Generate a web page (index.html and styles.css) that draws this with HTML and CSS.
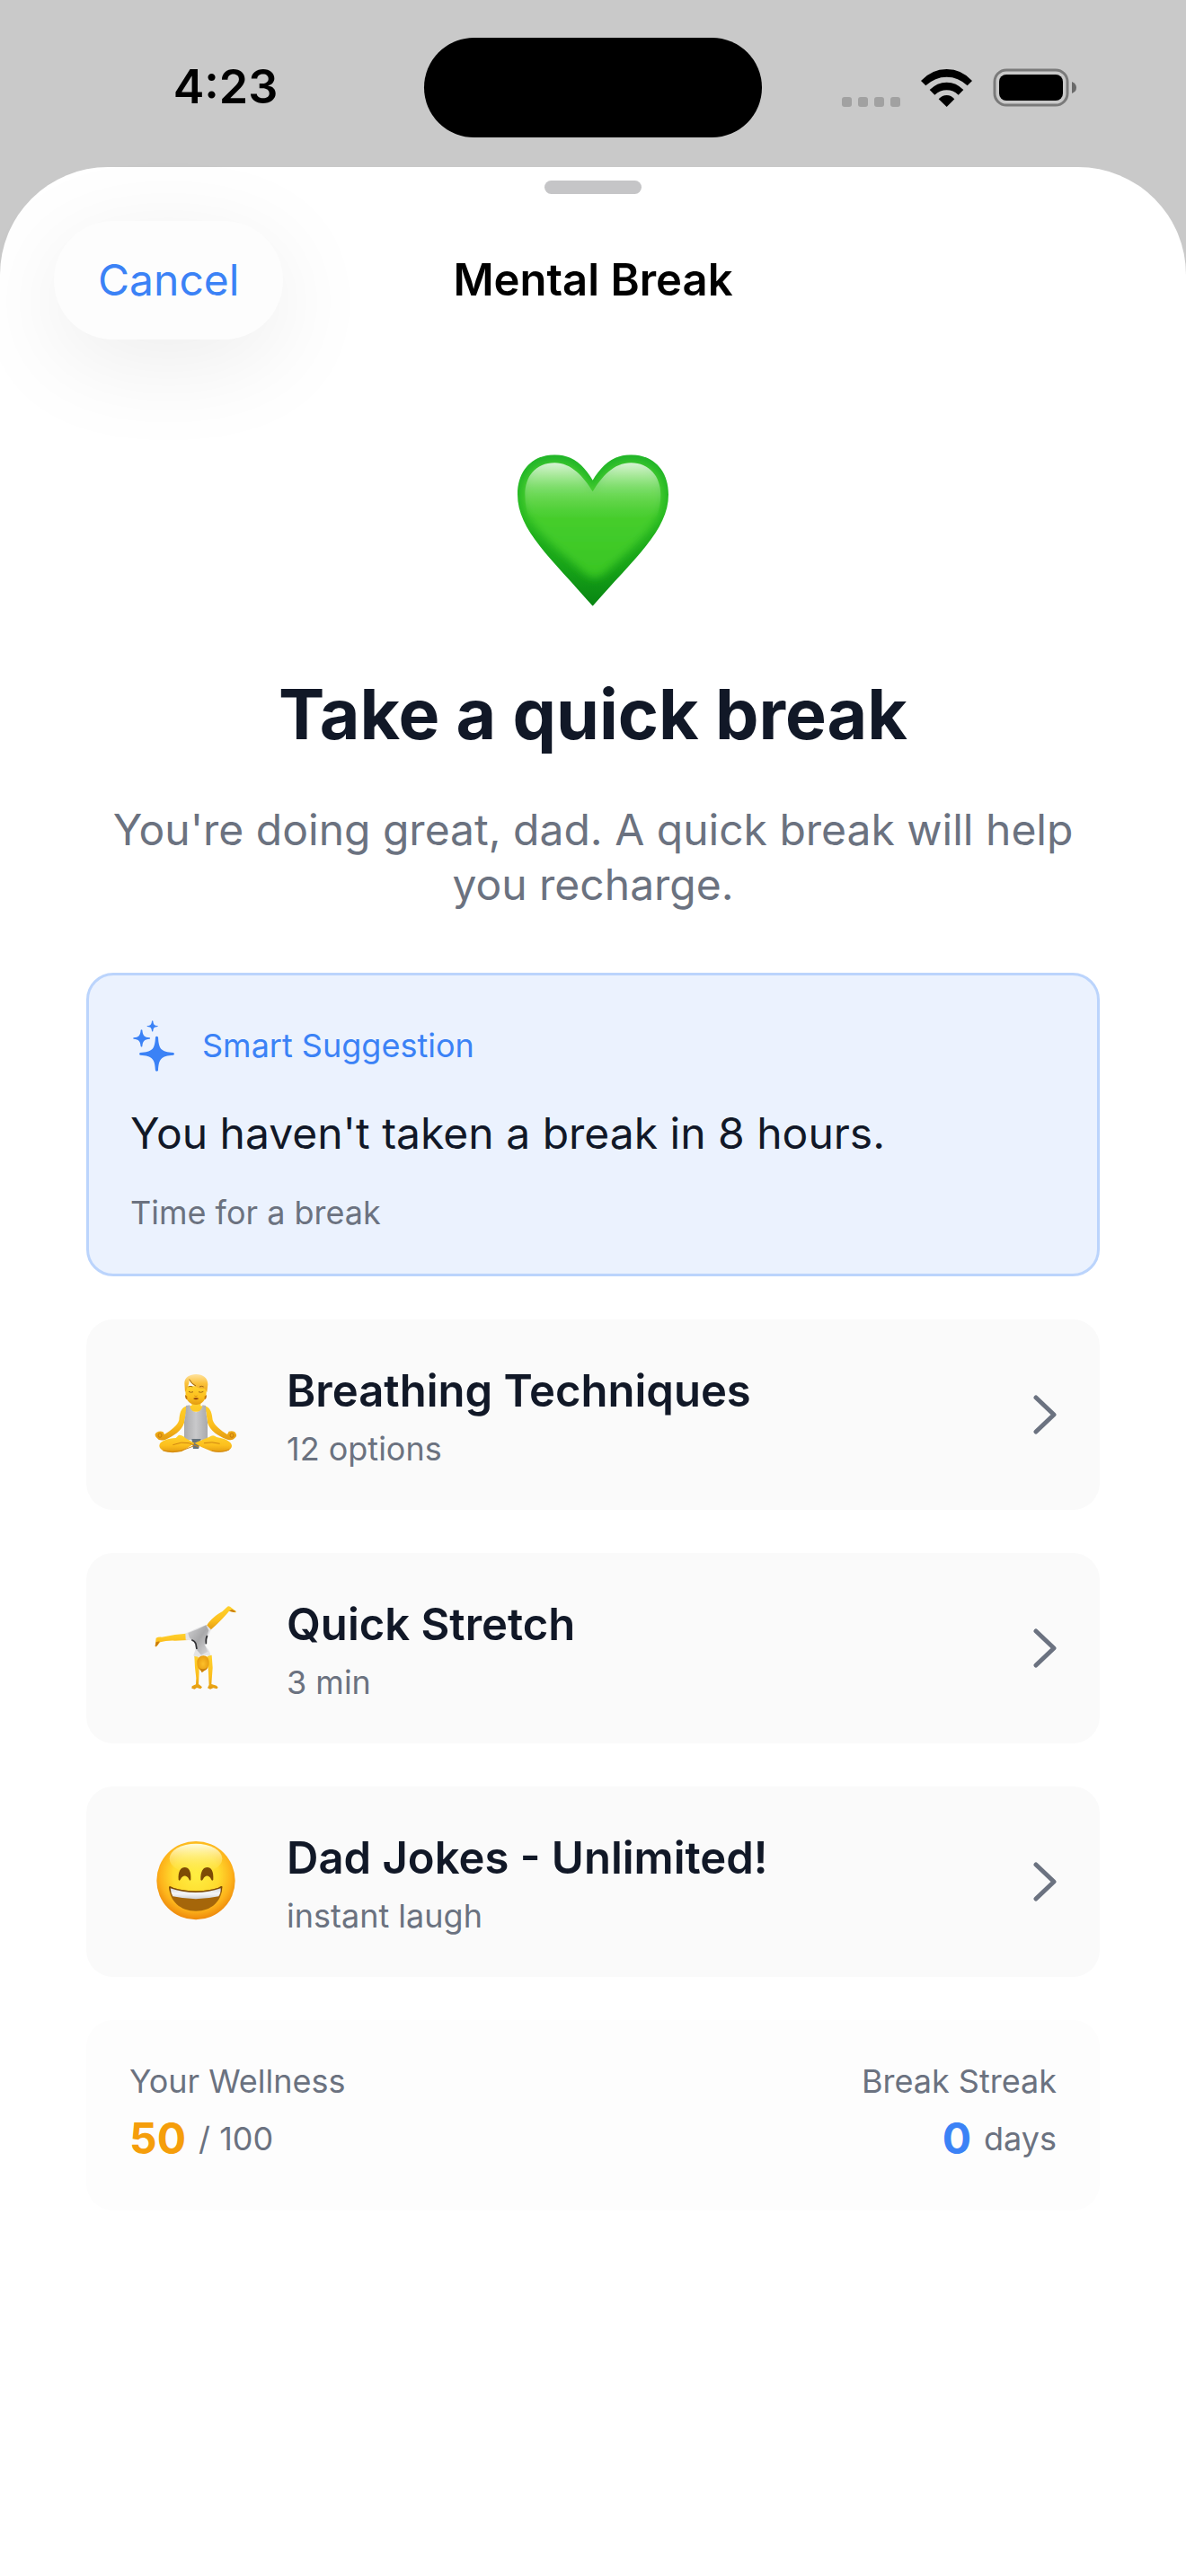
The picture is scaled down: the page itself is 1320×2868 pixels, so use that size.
FILE: index.html
```html
<!DOCTYPE html>
<html lang="en">
<head>
<meta charset="utf-8">
<meta name="viewport" content="width=device-width, initial-scale=1">
<title>Mental Break</title>
<link rel="stylesheet" href="styles.css">
</head>
<body>
<div class="screen">
  <div class="status-bar">
    <time class="status-time">4:23</time>
    <div class="island"></div>
    <div class="status-icons">
      <svg class="icon-signal" viewBox="0 0 65 11" aria-hidden="true">
        <g fill="#a1a1a1"><rect width="11" height="11" rx="3"/><rect x="18" width="11" height="11" rx="3"/><rect x="36" width="11" height="11" rx="3"/><rect x="54" width="11" height="11" rx="3"/></g>
      </svg>
      <svg class="icon-wifi" viewBox="375 75 171 126" aria-hidden="true">
        <path d="M375 114Q411 75 461 75T546 114L530 130Q500 101 461 101T391 130Z"/>
        <path d="M404 144Q429 119 461 119T517 144L500 161Q483 145 461 145T421 161Z"/>
        <path d="M434 175Q446 162 461 162T487 175L461 201Z"/>
      </svg>
      <svg class="icon-battery" viewBox="0 0 93 43" aria-hidden="true">
        <rect x="2" y="2" width="81" height="39" rx="13" fill="none" stroke="#7a7a7a" stroke-width="3"/>
        <rect x="7" y="7" width="71" height="29" rx="8"/>
        <path d="M88 15Q93 17 93 21.500T88 28Z" fill="#6a6a6a"/>
      </svg>
    </div>
  </div>

  <main class="sheet">
    <div class="grabber"></div>
    <header class="nav">
      <button class="cancel" type="button">Cancel</button>
      <h1 class="nav-title">Mental Break</h1>
    </header>

    <div class="content">
      <section class="hero">
        <svg class="heart" viewBox="105 77 504 506" role="img" aria-label="Green heart">
          <defs>
            <linearGradient id="heart-base" x1="0" y1="0" x2="0" y2="1"><stop offset="0" stop-color="#21b52a"/><stop offset=".4" stop-color="#27b920"/><stop offset=".75" stop-color="#16a118"/><stop offset="1" stop-color="#078312"/></linearGradient>
            <linearGradient id="heart-fill" x1="0" y1="0" x2="0" y2="1"><stop offset="0" stop-color="#4fd233"/><stop offset=".5" stop-color="#45cd2c"/><stop offset="1" stop-color="#38c522"/></linearGradient>
            <linearGradient id="heart-shine" x1="0" y1="0" x2="0" y2="1"><stop offset="0" stop-color="#fff" stop-opacity=".8"/><stop offset=".45" stop-color="#d8f5d0" stop-opacity=".35"/><stop offset="1" stop-color="#9be58a" stop-opacity="0"/></linearGradient>
            <filter id="heart-soft" x="-20%" y="-20%" width="140%" height="140%"><feGaussianBlur stdDeviation="14"/></filter>
            <clipPath id="heart-clip"><path d="M356 163C386 112 425 77 484 77C553 77 609 125 609 210C609 330 494 424 356 583C219 424 105 330 105 210C105 125 160 77 229 77C288 77 327 112 356 163Z"/></clipPath>
          </defs>
          <g clip-path="url(#heart-clip)">
            <rect x="100" y="70" width="520" height="520" fill="url(#heart-base)"/>
            <path filter="url(#heart-soft)" fill="url(#heart-fill)" d="M356 195C390 140 425 105 484 105C545 105 590 145 590 215C590 310 490 385 395 475Q362 500 330 475C240 390 122 310 122 215C122 145 170 105 229 105C288 105 325 140 356 195Z"/>
            <path fill="url(#heart-shine)" d="M356 200C325 150 285 104 229 104C165 104 130 150 130 210Q130 255 145 290H567Q583 255 583 210C583 150 545 104 484 104C425 104 387 150 356 200Z"/>
          </g>
        </svg>
        <h2 class="hero-title">Take a quick break</h2>
        <p class="hero-text">You're doing great, dad. A quick break will help you recharge.</p>
      </section>

      <section class="suggestion">
        <div class="suggestion-head">
          <svg class="icon-sparkles" viewBox="48 45 180 180" aria-hidden="true">
            <path d="M132 107Q136 102 141 107C143 146 150 156 192 159Q198 163 192 167C150 170 143 180 141 219Q136 224 132 219C130 180 123 170 81 167Q75 163 81 159C123 156 130 146 132 107Z"/>
            <path d="M83 83Q86 80 88 83C90 102 94 107 113 109Q116 111 113 113C94 115 90 120 88 138Q86 141 83 138C81 120 77 115 59 113Q56 111 59 109C77 107 81 102 83 83Z"/>
            <path d="M120 53Q122 50 124 53C125 64 128 68 139 69Q142 70 139 72C128 73 125 76 124 87Q122 90 120 87C119 76 116 73 105 72Q102 70 105 69C116 68 119 64 120 53Z"/>
          </svg>
          <span class="small suggestion-label">Smart Suggestion</span>
        </div>
        <p class="suggestion-message">You haven't taken a break in 8 hours.</p>
        <p class="small">Time for a break</p>
      </section>

      <button class="option" type="button">
        <span class="option-icon">
          <svg class="emoji" viewBox="66 87 276 276" aria-hidden="true">
            <defs>
              <linearGradient id="skin" x1="0" y1="0" x2="0" y2="1"><stop offset="0" stop-color="#ffd22e"/><stop offset=".6" stop-color="#fcbf1d"/><stop offset="1" stop-color="#e29a12"/></linearGradient>
              <linearGradient id="vest" x1="0" y1="0" x2="1" y2="0"><stop offset="0" stop-color="#a9a9ab"/><stop offset=".5" stop-color="#c9c9cb"/><stop offset="1" stop-color="#a9a9ab"/></linearGradient>
              <linearGradient id="hair" x1="0" y1="0" x2="0" y2="1"><stop offset="0" stop-color="#ffe3a0"/><stop offset=".5" stop-color="#fbc23c"/><stop offset="1" stop-color="#e9a51f"/></linearGradient>
            </defs>
            <path fill="url(#skin)" d="M190 178H220V196L238 197C254 203 258 222 260 243C266 262 287 277 309 291L314 281Q325 277 334 283Q345 295 334 303Q325 314 305 307C281 297 251 280 243 252L238 215H172L165 252C157 280 128 297 103 308Q82 315 74 303Q62 292 73 284Q85 277 95 283L99 291C121 277 143 262 148 243C150 222 153 203 170 197L190 195Z"/>
            <g fill="none" stroke="#c7790b" stroke-width="3"><ellipse cx="84" cy="294" rx="6" ry="7"/><ellipse cx="324" cy="294" rx="6" ry="7"/></g>
            <path fill="url(#vest)" d="M171 195L184 193C185 224 224 225 226 193L237 195C238 218 240 235 243 250V310H165V250C168 235 171 218 171 195Z"/>
            <path fill="#66727c" d="M190 306H221L213 339H195Z"/>
            <path fill="url(#skin)" d="M147 293Q159 292 170 304L222 333L258 348C286 354 322 349 324 330C325 314 298 304 273 300Q262 290 248 300L204 318L157 348C121 356 85 350 82 330C81 313 110 304 137 303Z"/>
            <path fill="none" stroke="#d08612" stroke-width="3" d="M127 326Q157 314 181 320L214 333M284 322Q258 314 231 320M94 345Q126 352 154 346L196 330M258 346Q292 353 315 342"/>
            <path fill="url(#skin)" d="M168 130H241L238 162C235 180 220 192 204 192S172 180 170 162Z"/>
            <path fill="#bf750d" d="M168 159L175 164V174Q168 174 168 159M240 159L233 164V174Q240 174 240 159"/>
            <path fill="url(#hair)" d="M168 150L166 121C165 100 185 90 204 90C228 90 244 102 244 124L241 150L234 138C214 140 195 130 181 110C183 122 177 128 173 140Z"/>
            <path fill="none" stroke="#9c6416" stroke-width="3" d="M182 107Q190 123 204 129M180 148Q187 153 195 149M213 149Q221 153 229 148M179 132Q186 128 193 132M216 132Q224 128 230 132"/>
            <path fill="none" stroke="#dd9310" stroke-width="3" d="M199 162Q204 166 209 162"/>
            <path fill="#8a3b10" d="M195 171Q204 166 214 171Q204 179 195 171"/>
          </svg>
        </span>
        <span class="option-text"><span class="option-title">Breathing Techniques</span><span class="small">12 options</span></span>
        <svg class="chevron" viewBox="0 0 26 44" aria-hidden="true"><path d="M3 3L23 22L3 41"/></svg>
      </button>

      <button class="option" type="button">
        <span class="option-icon">
          <svg class="emoji" viewBox="66 87 276 276" aria-hidden="true">
            <defs>
              <linearGradient id="suit" x1="0" y1="0" x2="1" y2="1"><stop offset="0" stop-color="#cfcfd1"/><stop offset=".5" stop-color="#a8a8aa"/><stop offset="1" stop-color="#d9d9db"/></linearGradient>
              <radialGradient id="head-back"><stop offset="0" stop-color="#fdc02a"/><stop offset="1" stop-color="#e89d10"/></radialGradient>
            </defs>
            <path fill="url(#skin)" d="M172 176L134 180L90 188Q79 187 71 191L68 219Q73 223 77 214L85 205Q105 199 134 200L178 198Z"/>
            <path fill="url(#skin)" d="M240 149C252 130 274 112 292 103L308 88Q312 82 318 86L338 102Q339 108 331 105L315 101C300 120 275 145 253 164Z"/>
            <path fill="#c87b10" d="M68 219L71 205L83 202L77 214ZM338 102L324 96L315 101L331 105Z"/>
            <path fill="#e4e4e6" d="M169 176Q205 158 239 147L255 163L244 187L235 215L249 235L255 253L238 249L220 251L201 258L196 249L203 228L200 207L187 199L170 197Z"/>
            <path fill="url(#suit)" d="M178 174Q211 163 238 148L247 166L240 187L233 213L244 236L222 248L208 232L204 211L190 197Q180 190 178 174Z"/>
            <path fill="none" stroke="#303033" stroke-width="5" d="M190 197Q201 201 204 211L207 228M242 183Q236 194 238 211"/>
            <path fill="url(#skin)" d="M199 252L212 254L215 304L213 345L217 348L225 355L220 361L207 357L200 362L190 359L191 352L204 346L205 325L201 290ZM242 252L257 248L260 290L256 345L273 350L278 356L274 361L262 358L252 362L243 358L248 347L246 310Z"/>
            <path fill="url(#head-back)" d="M208 274C207 260 217 250 229 250S249 260 248 276C248 289 239 296 230 302Q225 308 222 302C211 294 208 286 208 274Z"/>
            <path fill="#c97f0e" d="M211 288Q228 302 245 287Q241 297 230 301L223 306Q223 298 211 288Z"/>
          </svg>
        </span>
        <span class="option-text"><span class="option-title">Quick Stretch</span><span class="small">3 min</span></span>
        <svg class="chevron" viewBox="0 0 26 44" aria-hidden="true"><path d="M3 3L23 22L3 41"/></svg>
      </button>

      <button class="option" type="button">
        <span class="option-icon">
          <svg class="emoji" viewBox="66 87 276 276" aria-hidden="true">
            <defs>
              <radialGradient id="face" cx=".5" cy=".43" r=".58"><stop offset="0" stop-color="#ffee42"/><stop offset=".5" stop-color="#ffdc2e"/><stop offset=".78" stop-color="#fdb31b"/><stop offset="1" stop-color="#ec840a"/></radialGradient>
              <linearGradient id="face-shine" x1="0" y1="0" x2="0" y2="1"><stop offset="0" stop-color="#fffde0"/><stop offset="1" stop-color="#fff36a" stop-opacity="0"/></linearGradient>
              <linearGradient id="teeth" x1="0" y1="0" x2="0" y2="1"><stop offset="0" stop-color="#d5d7dc"/><stop offset=".5" stop-color="#f5f6f8"/><stop offset="1" stop-color="#cfd1d6"/></linearGradient>
            </defs>
            <circle cx="204" cy="221" r="131" fill="url(#face)"/>
            <ellipse cx="204" cy="148" rx="88" ry="50" fill="url(#face-shine)"/>
            <path fill="#7d4a05" d="M146 218C144 190 154 177 167 177S189 190 187 218Q184 225 181 217C174 202 160 202 153 217Q149 225 146 218ZM220 218C219 190 229 177 242 177S264 190 262 218Q258 225 255 217C248 202 235 202 228 217Q223 225 220 218Z"/>
            <path fill="#a5660a" d="M114 243C116 237 124 243 130 246C175 260 232 260 277 246C284 243 292 236 292 243C291 290 256 323 204 323S117 290 114 243Z"/>
            <path fill="#7d4a05" d="M114 243C116 237 124 243 130 246C175 260 232 260 277 246C284 243 292 236 292 243L289 260Q204 285 118 260Z"/>
            <path fill="url(#teeth)" d="M119 247C170 266 236 266 287 247Q288 263 280 274Q204 291 127 274Q120 262 119 247Z"/>
          </svg>
        </span>
        <span class="option-text"><span class="option-title">Dad Jokes - Unlimited!</span><span class="small">instant laugh</span></span>
        <svg class="chevron" viewBox="0 0 26 44" aria-hidden="true"><path d="M3 3L23 22L3 41"/></svg>
      </button>

      <section class="stats">
        <div class="stat">
          <span class="small">Your Wellness</span>
          <span class="stat-row"><strong class="stat-value wellness">50</strong><span class="small">/ 100</span></span>
        </div>
        <div class="stat stat-end">
          <span class="small">Break Streak</span>
          <span class="stat-row"><strong class="stat-value streak">0</strong><span class="small">days</span></span>
        </div>
      </section>
    </div>
  </main>
</div>
</body>
</html>
```
FILE: styles.css
```css
* {
  box-sizing: border-box;
}

body {
  margin: 0;
  background: #c9c9c9;
  color: #111827;
  font-family: Inter, "Liberation Sans", sans-serif;
  font-size: 48px;
  line-height: 64px;
}

h1, h2, p {
  margin: 0;
}

button {
  border: 0;
  font: inherit;
  color: inherit;
}

.screen {
  display: flex;
  flex-direction: column;
  min-height: 100vh;
}

/* Status bar */
.status-bar {
  display: grid;
  grid-template-columns: 1fr 376px 1fr;
  align-items: center;
  height: 186px;
  padding-top: 8px;
}

.status-time {
  padding-left: 30px;
  text-align: center;
  font-size: 52px;
  font-weight: 600;
  color: #000;
}

.island {
  height: 111px;
  border-radius: 56px;
  background: #000;
}

.status-icons {
  display: flex;
  justify-content: flex-end;
  align-items: flex-end;
  gap: 23px;
  padding-right: 122px;
}

.icon-signal {
  width: 65px;
  height: 11px;
}

.icon-wifi {
  width: 57px;
  height: 42px;
}

.icon-battery {
  width: 93px;
  height: 43px;
}

/* Sheet */
.sheet {
  flex: 1;
  display: flex;
  flex-direction: column;
  padding-top: 15px;
  border-radius: 120px 120px 0 0;
  background: #fff;
}

.grabber {
  align-self: center;
  width: 108px;
  height: 15px;
  border-radius: 8px;
  background: #c5c5c7;
}

.nav {
  display: grid;
  grid-template-columns: 1fr auto 1fr;
  align-items: center;
  padding: 30px 60px 0;
}

.cancel {
  justify-self: start;
  height: 132px;
  padding: 0 49px;
  border-radius: 66px;
  background: #fdfdfd;
  box-shadow: 0 24px 112px rgba(0, 0, 0, 0.08);
  color: #3b82f6;
}

.nav-title {
  font-size: 49px;
  font-weight: 600;
  color: #000;
}

.content {
  display: flex;
  flex-direction: column;
  gap: 48px;
  padding: 128px 96px 96px;
}

.hero {
  display: flex;
  flex-direction: column;
  align-items: center;
  padding-bottom: 20px;
  text-align: center;
}

.heart {
  width: 168px;
  height: 169px;
}

.hero-title {
  margin: 70px 0 48px;
  font-size: 77px;
  font-weight: 700;
  line-height: 100px;
}

.hero-text {
  line-height: 61px;
  color: #6b7280;
}

.small {
  font-size: 36px;
  line-height: 40px;
  color: #6b7280;
}

/* Suggestion */
.suggestion {
  display: flex;
  flex-direction: column;
  gap: 36px;
  padding: 48px 46px;
  border: 3px solid #bbd4fc;
  border-radius: 30px;
  background: #ebf2fe;
}

.suggestion-head {
  display: flex;
  align-items: center;
  gap: 20px;
}

.icon-sparkles {
  width: 60px;
  height: 60px;
  fill: #3b82f6;
}

.suggestion-label {
  color: #3b82f6;
}

/* Option rows */
.option {
  display: flex;
  align-items: center;
  padding: 48px;
  border-radius: 30px;
  background: #fafafa;
  text-align: left;
}

.option-icon {
  display: flex;
  justify-content: center;
  width: 148px;
}

.emoji {
  width: 92px;
  height: 92px;
  overflow: visible;
}

.option-text {
  flex: 1;
  display: flex;
  flex-direction: column;
  gap: 12px;
  padding-left: 27px;
}

.option-title {
  font-size: 49px;
  font-weight: 600;
}

.chevron {
  width: 26px;
  height: 44px;
  fill: none;
  stroke: #6b7280;
  stroke-width: 5;
  stroke-linecap: round;
  stroke-linejoin: round;
}

/* Stats */
.stats {
  display: flex;
  justify-content: space-between;
  padding: 48px;
  border-radius: 30px;
  background: #fdfdfd;
}

.stat {
  display: flex;
  flex-direction: column;
  gap: 12px;
}

.stat-end {
  align-items: flex-end;
}

.stat-row {
  display: flex;
  align-items: center;
  gap: 14px;
}

.stat-value {
  font-weight: 700;
}

.wellness {
  color: #f59e0b;
}

.streak {
  color: #3b82f6;
}
```
